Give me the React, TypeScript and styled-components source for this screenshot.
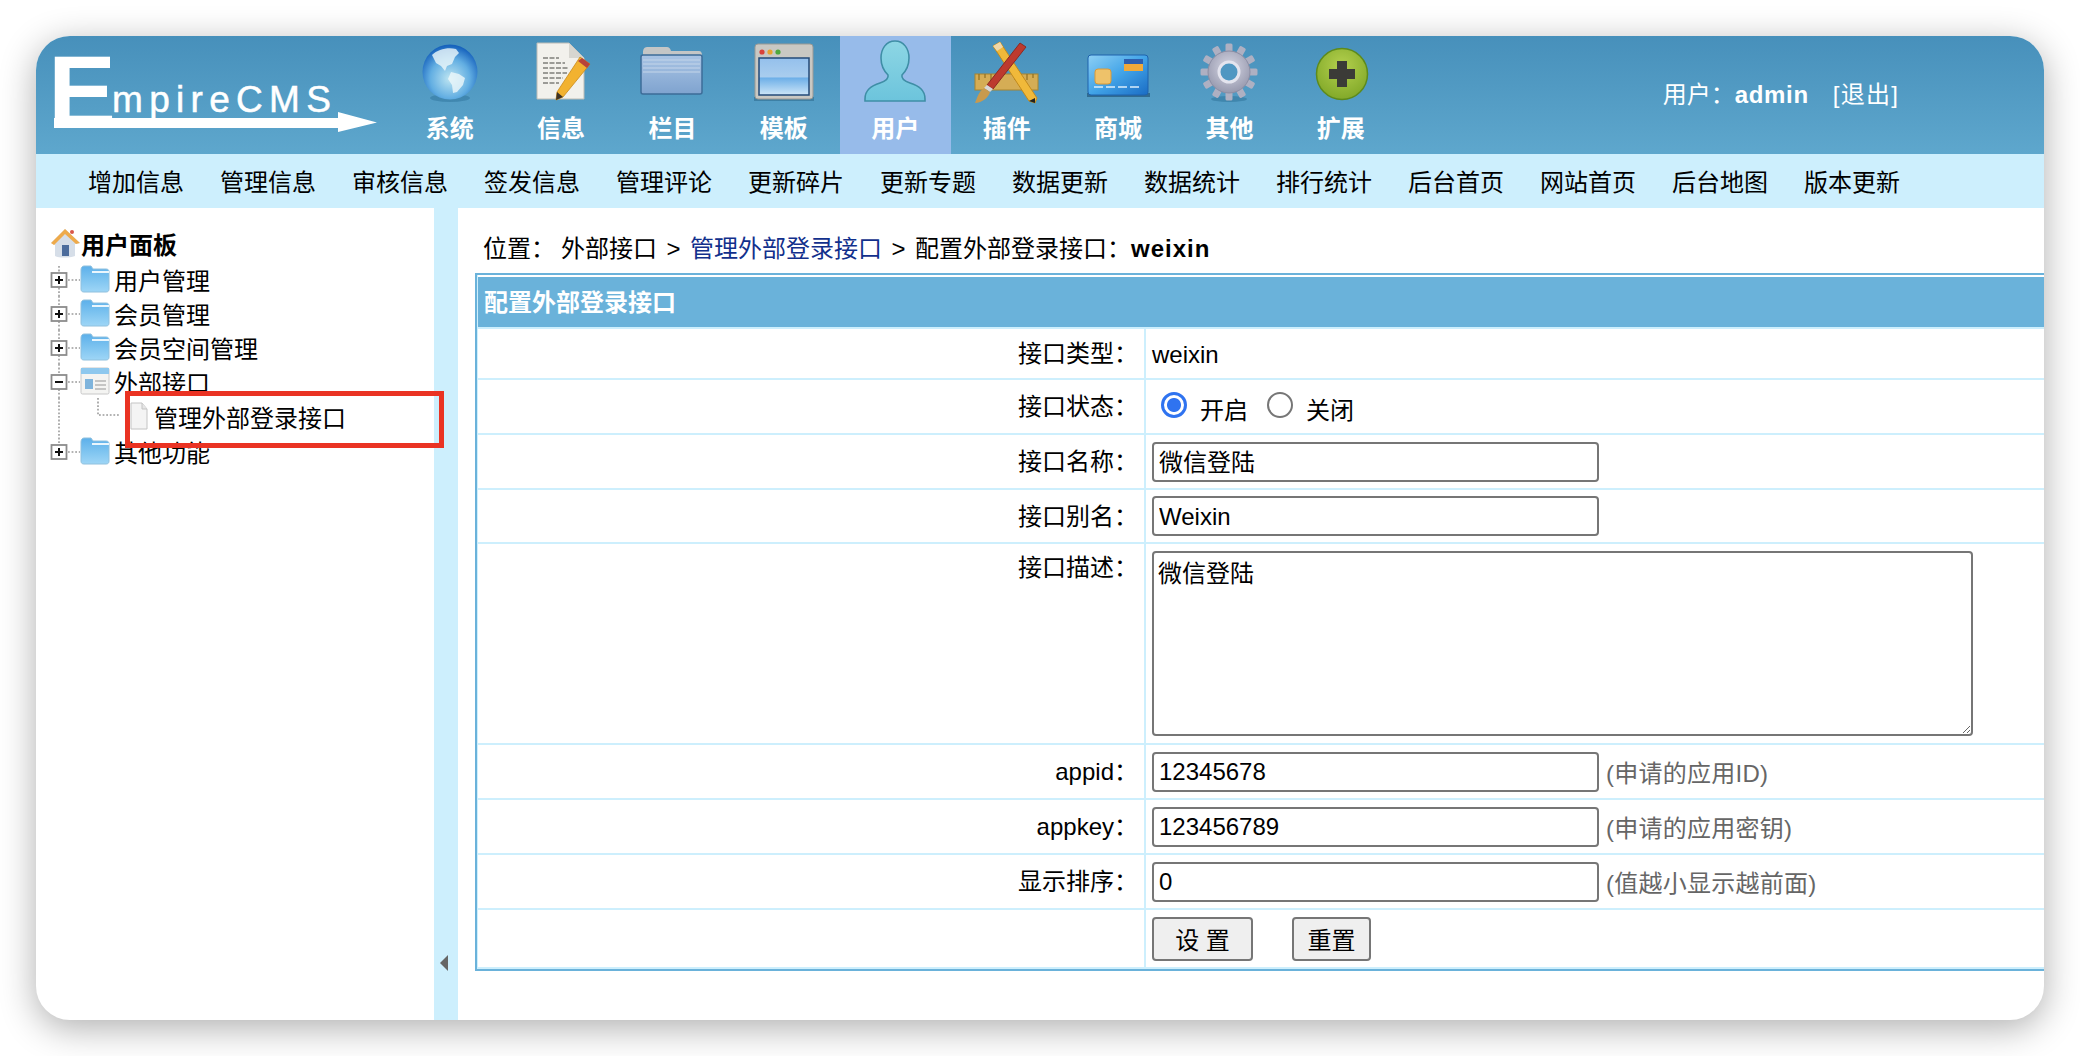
import React from "react";
import styled, { createGlobalStyle } from "styled-components";

const Global = createGlobalStyle`
  html, body { margin: 0; padding: 0; background: #fff; height: 100%; overflow: hidden; }
  body { font-family: "Liberation Sans", "Noto Sans CJK SC", sans-serif; font-size: 24px; color: #000; }
  * { box-sizing: border-box; }
`;

const Page = styled.div`
  width: 2080px;
  height: 1056px;
  padding: 36px;
`;
const Card = styled.div`
  width: 2008px;
  height: 984px;
  border-radius: 34px;
  overflow: hidden;
  background: #fff;
  box-shadow: 0 8px 36px rgba(0, 0, 0, 0.32);
  display: flex;
  flex-direction: column;
`;
const Header = styled.header`
  height: 118px;
  flex: none;
  display: flex;
  background: linear-gradient(#4790bb, #5ea7cd);
`;
const Logo = styled.div`
  position: relative;
  width: 358px;
  flex: none;
  display: flex;
  align-items: flex-start;
  padding-left: 12px;
  color: #fff;
`;
const LogoE = styled.span`
  font-weight: 700;
  font-size: 102px;
  line-height: 102px;
  margin-top: 5px;
`;
const LogoWord = styled.span`
  font-size: 37px;
  line-height: 40px;
  letter-spacing: 6.3px;
  margin-top: 44px;
  margin-left: -4px;
  -webkit-text-stroke: 0.5px #fff;
`;
const LogoArrow = styled.svg`
  position: absolute;
  left: 18px;
  top: 76px;
`;
const NavItem = styled.a<{ $active?: boolean }>`
  width: 111.4px;
  flex: none;
  padding-top: 4px;
  display: flex;
  flex-direction: column;
  align-items: center;
  background: ${(p) => (p.$active ? "#97bbea" : "transparent")};
  color: #fff;
  font-weight: 700;
  line-height: 50px;
  svg { display: block; flex: none; overflow: visible; }
`;
const UserBox = styled.div`
  margin-left: auto;
  margin-right: 145px;
  align-self: center;
  color: #fff;
  display: flex;
  gap: 24px;
  margin-top: -6px;
`;
const UserName = styled.b`
  font-weight: 700;
  letter-spacing: 0.7px;
`;
const Bracket = styled.span`
  letter-spacing: 1.2px;
`;
const SubNav = styled.nav`
  height: 54px;
  flex: none;
  background: #cdeffd;
  display: flex;
  align-items: center;
  gap: 36px;
  padding: 0 0 2px 52px;
`;
const Body = styled.div`
  flex: 1;
  display: flex;
  min-height: 0;
`;
const Side = styled.aside`
  position: relative;
  width: 398px;
  flex: none;
  padding: 18px 0 0 14px;
`;
const TreeRow = styled.div<{ $h?: number; $bold?: boolean }>`
  height: ${(p) => p.$h ?? 34}px;
  display: flex;
  align-items: center;
  font-weight: ${(p) => (p.$bold ? 700 : 400)};
  white-space: nowrap;
  svg { display: block; flex: none; overflow: visible; }
`;
const TreeTitle = styled(TreeRow)`
  margin-bottom: 2px;
`;
const TreeText = styled.span`
  margin-left: 4px;
`;
const LeafText = styled.span`
  margin-left: 6px;
`;
const Highlight = styled.div`
  position: absolute;
  left: 89px;
  top: 183px;
  width: 319px;
  height: 57px;
  border: 5.5px solid #ea3323;
  z-index: 2;
`;
const Splitter = styled.div`
  width: 24px;
  flex: none;
  background: #cdeffd;
  display: flex;
  align-items: flex-end;
  padding: 0 0 49px 6px;
`;
const Main = styled.main`
  flex: 1;
  min-width: 0;
  overflow: hidden;
  padding: 26px 0 0 17px;
`;
const Crumb = styled.div`
  height: 30px;
  line-height: 30px;
  margin: 0 0 9px 8px;
  white-space: nowrap;
`;
const CrumbLabel = styled.span`
  margin-right: 6px;
`;
const CrumbLink = styled.a`
  color: #12308c;
`;
const CrumbSep = styled.span`
  margin: 0 9.500px;
`;
const CrumbBold = styled.b`
  letter-spacing: 1px;
`;
const Panel = styled.div`
  width: 1700px;
  border: 2px solid #6ab2da;
`;
const Inner = styled.div`
  border-left: 1px solid #cdeffd;
  padding-top: 2px;
`;
const PanelTitle = styled.div`
  height: 52px;
  padding-left: 6px;
  background: #6ab2da;
  border-bottom: 2px solid #cdeffd;
  color: #fff;
  font-weight: 700;
  line-height: 52px;
`;
const Row = styled.div<{ $h: number }>`
  height: ${(p) => p.$h}px;
  display: flex;
  border-bottom: 2px solid #cdeffd;
`;
const Label = styled.div<{ $top?: boolean }>`
  width: 666px;
  flex: none;
  padding-right: 6px;
  text-align: right;
  align-self: ${(p) => (p.$top ? "flex-start" : "center")};
  margin-top: ${(p) => (p.$top ? "9px" : "1px")};
  line-height: 30px;
`;
const Value = styled.div`
  flex: 1;
  display: flex;
  align-items: center;
  border-left: 2px solid #cdeffd;
  padding-left: 6px;
`;
const PlainValue = styled.span`
  margin-top: 2px;
`;
const Input = styled.input<{ $cjk?: boolean }>`
  width: 447px;
  height: 40px;
  border: 2px solid #767676;
  border-radius: 4px;
  padding: ${(p) => (p.$cjk ? "0 5px 2px" : "1px 6px 0 5px")};
  font: inherit;
  color: #000;
  background: #fff;
  outline: none;
`;
const Area = styled.textarea`
  display: block;
  width: 821px;
  height: 185px;
  border: 2px solid #767676;
  border-radius: 4px;
  padding: 1px 4px;
  font: inherit;
  color: #000;
  background: #fff;
  outline: none;
`;
const Hint = styled.span`
  color: #666;
  margin: -1px 0 0 7px;
  letter-spacing: 0.25px;
`;
const Radio = styled.input`
  appearance: none;
  width: 26px;
  height: 26px;
  margin: 0 13px 3px 9px;
  border-radius: 50%;
  border: 2px solid #767676;
  background: #fff;
  &:checked {
    border: 3px solid #2f73f0;
    background: radial-gradient(circle, #2f73f0 0 6.5px, #fff 7.5px);
  }
`;
const RadioText = styled.span`
  margin-right: 10px;
  margin-top: 4px;
`;
const Btn = styled.button<{ $w: number }>`
  width: ${(p) => p.$w}px;
  height: 44px;
  margin-right: 39px;
  border: 2px solid #767676;
  border-radius: 4px;
  background: #efefef;
  font: inherit;
  color: #000;
  padding: 0;
`;

/* header icons */
const Globe = () => (
  <svg width="64" height="64" viewBox="0 0 64 64">
    <defs>
      <radialGradient id="g1" cx="0.5" cy="0.62" r="0.6">
        <stop offset="0" stopColor="#bfe6f2" />
        <stop offset="0.6" stopColor="#62aee2" />
        <stop offset="1" stopColor="#1763bd" />
      </radialGradient>
    </defs>
    <ellipse cx="32" cy="58" rx="20" ry="4" fill="#2b6f96" opacity="0.45" />
    <circle cx="32" cy="32" r="27.5" fill="url(#g1)" />
    <path d="M14 15c6-6 16-8 24-6l3 4-4 4-3 7-5 2-2 5-4-5-5-3-4-8zM33 32l8 2 6 4-2 7-6 7-4 1-1-8-4-6z" fill="#eef7fa" opacity="0.8" />
  </svg>
);
const DocPencil = () => (
  <svg width="64" height="64" viewBox="0 0 64 64">
    <path d="M8 3h32l15 15v41H8z" fill="#f2f1ec" stroke="#bcbcb6" />
    <path d="M40 3v15h15z" fill="#d7d6d0" />
    <path d="M14 18h16M14 23h22M14 28h26M14 33h24M14 38h20M14 43h16" stroke="#9b9b96" strokeWidth="2" strokeDasharray="5 1.5" />
    <path d="M51 17l10 7-27 33-7 3 1-8z" fill="#f2b230" stroke="#c98a1a" strokeWidth="0.8" />
    <path d="M53 18l8 6-3 4-9-7z" fill="#b8433a" />
    <path d="M27 60l1-8 6 5z" fill="#3d3326" />
  </svg>
);
const Folder = () => (
  <svg width="64" height="64" viewBox="0 0 64 64">
    <defs>
      <linearGradient id="g3" x1="0" y1="0" x2="0" y2="1">
        <stop offset="0" stopColor="#a9c4e4" />
        <stop offset="1" stopColor="#7fa3cf" />
      </linearGradient>
    </defs>
    <path d="M3 53V12c0-2 1-5 4-5h20c2 0 3 1 4 4h28c2 0 3 2 3 4v38z" fill="#c4c6c6" />
    <rect x="1" y="15" width="61" height="39" rx="2" fill="url(#g3)" stroke="#3d6c98" strokeWidth="1.5" />
    <path d="M3 20h57M3 24h57M3 28h57M3 32h57" stroke="#c3d5ea" strokeWidth="1.5" opacity="0.7" />
  </svg>
);
const WindowIcon = () => (
  <svg width="64" height="64" viewBox="0 0 64 64">
    <defs>
      <linearGradient id="g4" x1="0" y1="0" x2="0" y2="1">
        <stop offset="0" stopColor="#94c0ec" />
        <stop offset="0.5" stopColor="#a9cdee" />
        <stop offset="0.55" stopColor="#6fb0e8" />
        <stop offset="1" stopColor="#cde5f7" />
      </linearGradient>
    </defs>
    <rect x="2" y="57" width="60" height="4" fill="#2f6d90" opacity="0.6" />
    <rect x="3" y="4" width="58" height="55" rx="3" fill="#c9c8c3" stroke="#9a9994" />
    <circle cx="10" cy="12" r="2.6" fill="#d9423a" />
    <circle cx="18" cy="12" r="2.6" fill="#e8a32f" />
    <circle cx="26" cy="12" r="2.6" fill="#4fa83d" />
    <rect x="7" y="18" width="50" height="37" fill="url(#g4)" stroke="#234a78" strokeWidth="1.5" />
  </svg>
);
const UserIcon = () => (
  <svg width="64" height="64" viewBox="0 0 64 64">
    <defs>
      <linearGradient id="g5" x1="0" y1="0" x2="0" y2="1">
        <stop offset="0" stopColor="#8dd6e4" />
        <stop offset="1" stopColor="#6cc4dc" />
      </linearGradient>
    </defs>
    <path d="M32 1c9 0 14 8 14 17 0 7-3 13-7 17-1 4 2 6 8 8 9 3 15 7 15 16v2H2v-2c0-9 6-13 15-16 6-2 9-4 8-8-4-4-7-10-7-17C18 9 23 1 32 1z" fill="url(#g5)" stroke="#3f8ea6" strokeWidth="1.6" />
  </svg>
);
const ToolsIcon = () => (
  <svg width="68" height="64" viewBox="0 0 68 64">
    <rect x="2" y="34" width="63" height="16" fill="#d5ad55" stroke="#a8842f" />
    <path d="M6 34v6M12 34v4M18 34v6M24 34v4M42 34v6M48 34v4M54 34v6M60 34v4" stroke="#8f6f22" strokeWidth="1.2" />
    <path d="M20 6l7-4 37 56-2 5-6-2z" fill="#f0b93a" stroke="#c18a1d" />
    <path d="M20 6l7-4 3 5-6 4z" fill="#efd7a8" />
    <path d="M62 63l-6-2 6-3z" fill="#222" />
    <path d="M47 3l6 4-33 42-6-4z" fill="#bd3a2e" stroke="#8c2a22" />
    <path d="M14 45l6 4-3 3-6-4z" fill="#d8d8d8" />
    <path d="M11 48l6 4c-1 5-8 11-15 11 2-4 3-11 9-15z" fill="#c89a4e" />
  </svg>
);
const CardIcon = () => (
  <svg width="64" height="64" viewBox="0 0 64 64">
    <defs>
      <linearGradient id="g7" x1="0" y1="0" x2="1" y2="1">
        <stop offset="0" stopColor="#8ed0f4" />
        <stop offset="0.5" stopColor="#42a4e8" />
        <stop offset="1" stopColor="#1a6cc4" />
      </linearGradient>
    </defs>
    <rect x="1" y="53" width="63" height="4" fill="#24577a" opacity="0.7" />
    <rect x="2" y="15" width="60" height="40" rx="3" fill="url(#g7)" stroke="#1e62ad" />
    <rect x="9" y="29" width="16" height="15" rx="3" fill="#eec26a" stroke="#d89a3a" />
    <rect x="38" y="19" width="19" height="5" fill="#2d5fb0" />
    <rect x="38" y="24" width="19" height="7" fill="#f0a93a" />
    <path d="M8 47h48" stroke="#dbeefb" strokeWidth="1.5" strokeDasharray="9 3" />
  </svg>
);
const GearIcon = () => (
  <svg width="64" height="64" viewBox="0 0 64 64">
    <defs>
      <radialGradient id="g8" cx="0.5" cy="0.4" r="0.6">
        <stop offset="0" stopColor="#d8d9e6" />
        <stop offset="1" stopColor="#9799ae" />
      </radialGradient>
    </defs>
    <ellipse cx="32" cy="59" rx="18" ry="3" fill="#2b6f96" opacity="0.5" />
    {Array.from({ length: 12 }, (_, i) => (
      <rect key={i} x="28.5" y="3.5" width="7" height="12" rx="1.5" fill="#aeb0c2" transform={`rotate(${i * 30} 32 32)`} />
    ))}
    <circle cx="32" cy="32" r="21" fill="url(#g8)" stroke="#8b8da3" />
    <circle cx="32" cy="32" r="10" fill="#4f97c2" stroke="#e3e4ee" strokeWidth="3" />
  </svg>
);
const PlusIcon = () => (
  <svg width="64" height="64" viewBox="0 0 64 64">
    <defs>
      <radialGradient id="g9" cx="0.5" cy="0.35" r="0.7">
        <stop offset="0" stopColor="#b4d04e" />
        <stop offset="1" stopColor="#7ea626" />
      </radialGradient>
    </defs>
    <circle cx="33" cy="34" r="25.5" fill="url(#g9)" stroke="#5d8a1c" strokeWidth="1.5" />
    <path d="M28 21h10v8h8v10h-8v8H28v-8h-8V29h8z" fill="#3b3b37" />
  </svg>
);

/* tree icons */
const Dots = "#9b9b9b";
const TreeToggle = ({ open, last, first }: { open?: boolean; last?: boolean; first?: boolean }) => (
  <svg width="30" height="34" viewBox="0 0 30 34">
    <path d={`M9 ${first ? 4 : 0}V${last ? 18 : 34}M18 18H30`} stroke={Dots} strokeWidth="1.6" strokeDasharray="1.8 1.8" fill="none" />
    <rect x="1.5" y="11" width="15" height="14" fill="#fff" stroke="#8c8c8c" strokeWidth="1.8" />
    <path d={open ? "M5 18h8" : "M5 18h8M9 14v8"} stroke="#111" strokeWidth="2" />
  </svg>
);
const LeafLines = () => (
  <svg width="80" height="36" viewBox="0 0 80 36">
    <path d="M9 0V36M48 0V17H70" stroke={Dots} strokeWidth="1.6" strokeDasharray="1.8 1.8" fill="none" />
  </svg>
);
const TreeFolder = () => (
  <svg width="30" height="28" viewBox="0 0 30 28">
    <defs>
      <linearGradient id="tf" x1="0" y1="0" x2="0" y2="1">
        <stop offset="0" stopColor="#5cb0ea" />
        <stop offset="1" stopColor="#9ed6f6" />
      </linearGradient>
    </defs>
    <path d="M1 5c0-2 1-4 3-4h7l2 3h13c2 0 3 1 3 3v17c0 2-1 3-3 3H4c-2 0-3-1-3-3z" fill="url(#tf)" stroke="#8fc0de" />
    <path d="M12 6h17v2H12z" fill="#eaf6fd" />
  </svg>
);
const TreeForm = () => (
  <svg width="30" height="28" viewBox="0 0 30 28">
    <rect x="1" y="1" width="28" height="26" rx="1.5" fill="#f4f4f2" stroke="#c8c8c8" />
    <rect x="1" y="1" width="28" height="6" fill="#8ec8ee" />
    <rect x="5" y="12" width="8" height="10" fill="#7fb4dc" />
    <path d="M15 14h11M15 18h11M15 22h11" stroke="#b5b5b5" strokeWidth="1.5" />
  </svg>
);
const TreeDoc = () => (
  <svg width="18" height="28" viewBox="0 0 18 28">
    <path d="M1 1h11l5 6v20H1z" fill="#f4f4f4" stroke="#c4c4c4" />
    <path d="M12 1v6h5" fill="#e6e6e6" stroke="#c4c4c4" />
  </svg>
);
const House = () => (
  <svg width="31" height="30" viewBox="0 0 31 30">
    <path d="M15 1L1 15l4 2v11c4 2 14 2 20 0V16l5-1z" fill="#d6dee8" />
    <path d="M15 1L1 15l3 2L15 6l11 10 4-1z" fill="#eeaa4a" />
    <rect x="12" y="17" width="7" height="11" fill="#4c6c9c" />
    <circle cx="22" cy="4" r="2" fill="#d9574a" />
  </svg>
);

const navItems: { label: string; icon: React.ReactNode; active?: boolean }[] = [
  { label: "系统", icon: <Globe /> },
  { label: "信息", icon: <DocPencil /> },
  { label: "栏目", icon: <Folder /> },
  { label: "模板", icon: <WindowIcon /> },
  { label: "用户", icon: <UserIcon />, active: true },
  { label: "插件", icon: <ToolsIcon /> },
  { label: "商城", icon: <CardIcon /> },
  { label: "其他", icon: <GearIcon /> },
  { label: "扩展", icon: <PlusIcon /> },
];
const subNav = ["增加信息", "管理信息", "审核信息", "签发信息", "管理评论", "更新碎片", "更新专题", "数据更新", "数据统计", "排行统计", "后台首页", "网站首页", "后台地图", "版本更新"];

const noop = () => {};

export default function App() {
  return (
    <Page>
      <Global />
      <Card>
        <Header>
          <Logo>
            <LogoE>E</LogoE>
            <LogoWord>mpireCMS</LogoWord>
            <LogoArrow width="330" height="24" viewBox="0 0 330 24">
              <path d="M0 6H284V0L323 10.500L284 20V16H0z" fill="#fff" />
            </LogoArrow>
          </Logo>
          {navItems.map((n) => (
            <NavItem key={n.label} $active={n.active}>
              {n.icon}
              {n.label}
            </NavItem>
          ))}
          <UserBox>
            <span>
              用户：<UserName>admin</UserName>
            </span>
            <Bracket>[退出]</Bracket>
          </UserBox>
        </Header>
        <SubNav>
          {subNav.map((s) => (
            <a key={s}>{s}</a>
          ))}
        </SubNav>
        <Body>
          <Side>
            <TreeTitle $bold>
              <House />
              <span>用户面板</span>
            </TreeTitle>
            <TreeRow>
              <TreeToggle first />
              <TreeFolder />
              <TreeText>用户管理</TreeText>
            </TreeRow>
            <TreeRow>
              <TreeToggle />
              <TreeFolder />
              <TreeText>会员管理</TreeText>
            </TreeRow>
            <TreeRow>
              <TreeToggle />
              <TreeFolder />
              <TreeText>会员空间管理</TreeText>
            </TreeRow>
            <TreeRow>
              <TreeToggle open />
              <TreeForm />
              <TreeText>外部接口</TreeText>
            </TreeRow>
            <TreeRow $h={36}>
              <LeafLines />
              <TreeDoc />
              <LeafText>管理外部登录接口</LeafText>
            </TreeRow>
            <TreeRow>
              <TreeToggle last />
              <TreeFolder />
              <TreeText>其他功能</TreeText>
            </TreeRow>
            <Highlight />
          </Side>
          <Splitter>
            <svg width="9" height="16" viewBox="0 0 9 16">
              <path d="M8 0V16L0 8z" fill="#666" />
            </svg>
          </Splitter>
          <Main>
            <Crumb>
              <CrumbLabel>位置：</CrumbLabel>外部接口<CrumbSep>&gt;</CrumbSep><CrumbLink>管理外部登录接口</CrumbLink><CrumbSep>&gt;</CrumbSep>配置外部登录接口：<CrumbBold>weixin</CrumbBold>
            </Crumb>
            <Panel>
              <Inner>
                <PanelTitle>配置外部登录接口</PanelTitle>
                <Row $h={51}>
                  <Label>接口类型：</Label>
                  <Value><PlainValue>weixin</PlainValue></Value>
                </Row>
                <Row $h={55}>
                  <Label>接口状态：</Label>
                  <Value>
                    <Radio type="radio" name="st" defaultChecked />
                    <RadioText>开启</RadioText>
                    <Radio type="radio" name="st" />
                    <RadioText>关闭</RadioText>
                  </Value>
                </Row>
                <Row $h={55}>
                  <Label>接口名称：</Label>
                  <Value><Input $cjk value="微信登陆" onChange={noop} /></Value>
                </Row>
                <Row $h={54}>
                  <Label>接口别名：</Label>
                  <Value><Input value="Weixin" onChange={noop} /></Value>
                </Row>
                <Row $h={201}>
                  <Label $top>接口描述：</Label>
                  <Value><Area value="微信登陆" onChange={noop} /></Value>
                </Row>
                <Row $h={55}>
                  <Label>appid：</Label>
                  <Value><Input value="12345678" onChange={noop} /><Hint>(申请的应用ID)</Hint></Value>
                </Row>
                <Row $h={55}>
                  <Label>appkey：</Label>
                  <Value><Input value="123456789" onChange={noop} /><Hint>(申请的应用密钥)</Hint></Value>
                </Row>
                <Row $h={55}>
                  <Label>显示排序：</Label>
                  <Value><Input value="0" onChange={noop} /><Hint>(值越小显示越前面)</Hint></Value>
                </Row>
                <Row $h={59}>
                  <Label />
                  <Value>
                    <Btn $w={101}>设 置</Btn>
                    <Btn $w={79}>重置</Btn>
                  </Value>
                </Row>
              </Inner>
            </Panel>
          </Main>
        </Body>
      </Card>
    </Page>
  );
}
